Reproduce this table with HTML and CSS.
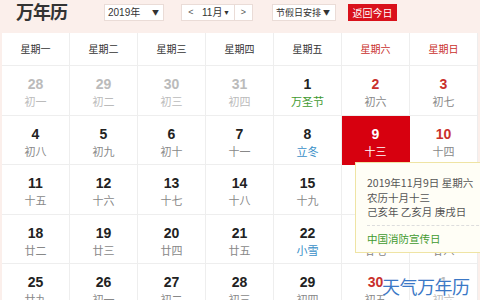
FILE: index.html
```html
<!DOCTYPE html>
<html lang="zh-CN">
<head>
<meta charset="utf-8">
<title>万年历</title>
<link rel="stylesheet" href="styles.css">
</head>
<body>
<div class="page">
  <header class="topbar">
    <h1 class="title">万年历</h1>
    <div class="sel sel-year"><span>2019年</span><i class="arr">▼</i></div>
    <div class="monthgrp">
      <span class="mbtn">&lt;</span>
      <span class="msel">11月<i class="arr">▼</i></span>
      <span class="mbtn mnext">&gt;</span>
    </div>
    <div class="sel sel-hol"><span>节假日安排</span><i class="arr">▼</i></div>
    <div class="today-btn">返回今日</div>
  </header>

  <div class="cal">
    <div class="wk">星期一</div>
    <div class="wk">星期二</div>
    <div class="wk">星期三</div>
    <div class="wk">星期四</div>
    <div class="wk">星期五</div>
    <div class="wk we">星期六</div>
    <div class="wk we">星期日</div>

    <div class="day other"><b>28</b><span>初一</span></div>
    <div class="day other"><b>29</b><span>初二</span></div>
    <div class="day other"><b>30</b><span>初三</span></div>
    <div class="day other"><b>31</b><span>初四</span></div>
    <div class="day"><b>1</b><span class="fest">万圣节</span></div>
    <div class="day we"><b>2</b><span>初六</span></div>
    <div class="day we"><b>3</b><span>初七</span></div>

    <div class="day"><b>4</b><span>初八</span></div>
    <div class="day"><b>5</b><span>初九</span></div>
    <div class="day"><b>6</b><span>初十</span></div>
    <div class="day"><b>7</b><span>十一</span></div>
    <div class="day"><b>8</b><span class="term">立冬</span></div>
    <div class="day we today"><b>9</b><span>十三</span></div>
    <div class="day we"><b>10</b><span>十四</span></div>

    <div class="day"><b>11</b><span>十五</span></div>
    <div class="day"><b>12</b><span>十六</span></div>
    <div class="day"><b>13</b><span>十七</span></div>
    <div class="day"><b>14</b><span>十八</span></div>
    <div class="day"><b>15</b><span>十九</span></div>
    <div class="day we"><b>16</b><span>二十</span></div>
    <div class="day we"><b>17</b><span>廿一</span></div>

    <div class="day"><b>18</b><span>廿二</span></div>
    <div class="day"><b>19</b><span>廿三</span></div>
    <div class="day"><b>20</b><span>廿四</span></div>
    <div class="day"><b>21</b><span>廿五</span></div>
    <div class="day"><b>22</b><span class="term">小雪</span></div>
    <div class="day we"><b>23</b><span>廿七</span></div>
    <div class="day we"><b>24</b><span>廿八</span></div>

    <div class="day"><b>25</b><span>廿九</span></div>
    <div class="day"><b>26</b><span>初一</span></div>
    <div class="day"><b>27</b><span>初二</span></div>
    <div class="day"><b>28</b><span>初三</span></div>
    <div class="day"><b>29</b><span>初四</span></div>
    <div class="day we"><b>30</b><span>初五</span></div>
    <div class="day other"><b>1</b><span>初六</span></div>
  </div>

  <div class="tip">
    <p>2019年11月9日 星期六</p>
    <p>农历十月十三</p>
    <p>己亥年 乙亥月 庚戌日</p>
    <p class="tip-fest">中国消防宣传日</p>
  </div>

  <div class="mark">天气万年历</div>
</div>
</body>
</html>
```

FILE: styles.css
```css
* { box-sizing: border-box; }

html, body {
  margin: 0;
  padding: 0;
}

body {
  width: 480px;
  height: 300px;
  overflow: hidden;
  background: #fbefeb;
  font-family: "Noto Sans CJK SC", "Liberation Sans", sans-serif;
  color: #333;
}

.page {
  position: relative;
  width: 480px;
  height: 300px;
}

.topbar {
  height: 33px;
  display: flex;
  align-items: flex-start;
  padding: 4px 0 0 16px;
}

.title {
  margin: -4px 37px 0 0;
  font-size: 18px;
  line-height: 22px;
  font-weight: bold;
  color: #333;
  letter-spacing: -1px;
  white-space: nowrap;
}

.sel,
.monthgrp {
  height: 17px;
  background: #fff;
  border: 1px solid #eadcd7;
  font-size: 10px;
  line-height: 15px;
  color: #333;
  display: flex;
  align-items: center;
  white-space: nowrap;
}

.arr {
  font-style: normal;
  font-size: 7px;
  line-height: 15px;
  color: #333;
}

.sel-year {
  width: 60px;
  padding: 0 4px 0 3px;
  justify-content: space-between;
  margin-right: 17px;
}

.sel-year span {
  font-family: "Liberation Sans", "Noto Sans CJK SC", sans-serif;
}

.monthgrp {
  width: 72px;
  margin-right: 19px;
}

.mbtn {
  width: 18px;
  text-align: center;
  font-family: "Liberation Sans", sans-serif;
  font-size: 9px;
  color: #555;
}

.mnext {
  border-left: 1px solid #eadcd7;
  height: 15px;
}

.msel {
  flex: 1;
  display: flex;
  justify-content: space-between;
  padding: 0 4px 0 2px;
  font-family: "Liberation Sans", "Noto Sans CJK SC", sans-serif;
}

.sel-hol {
  width: 64px;
  padding: 0 5px 0 3px;
  justify-content: space-between;
  margin-right: 12px;
  font-size: 9px;
}

.today-btn {
  width: 49px;
  height: 17px;
  background: #d9111b;
  color: #fff;
  font-size: 10px;
  line-height: 17px;
  text-align: center;
  white-space: nowrap;
}

.cal {
  margin-left: 2px;
  width: 476px;
  background: #fff;
  display: grid;
  grid-template-columns: repeat(7, 68px);
  grid-template-rows: 33px 50px 49px 50px 49px 50px;
}

.wk,
.day {
  border-right: 1px solid #eee;
  border-bottom: 1px solid #eee;
  text-align: center;
}

.wk {
  font-size: 10px;
  line-height: 32px;
  color: #333;
}

.wk.we { color: #c9302c; }

.day {
  padding-top: 10px;
}

.day b {
  display: block;
  font-family: "Liberation Sans", sans-serif;
  font-weight: bold;
  font-size: 14px;
  line-height: 16px;
  color: #222;
}

.day span {
  display: block;
  margin-top: 1px;
  font-size: 11px;
  line-height: 16px;
  color: #888;
}

.day.we b { color: #c9302c; }

.day.other b,
.day.other span { color: #bbb; }

.day .fest { color: #3f9a2f; }
.day .term { color: #3a8fc8; }

.day.today {
  background: #d7000f;
  border-color: #d7000f;
}
.day.today b,
.day.today span { color: #fff; }

.tip {
  position: absolute;
  left: 355px;
  top: 162px;
  width: 140px;
  height: 91px;
  background: #fffef6;
  border: 1px solid #efe4a4;
  padding: 13px 0 0 11px;
  font-size: 10.5px;
  line-height: 14.5px;
  color: #555;
}

.tip p {
  margin: 0;
  white-space: nowrap;
}

.tip-fest {
  margin-top: 5px !important;
  padding-top: 6px;
  border-top: 1px dashed #ddd;
  color: #3f9a2f;
}

.mark {
  position: absolute;
  left: 382px;
  top: 275px;
  font-size: 18px;
  line-height: 22px;
  color: #3b78c6;
  letter-spacing: -0.5px;
  white-space: nowrap;
  text-shadow: 0 0 2px #fff, 0 0 2px #fff;
}
```
